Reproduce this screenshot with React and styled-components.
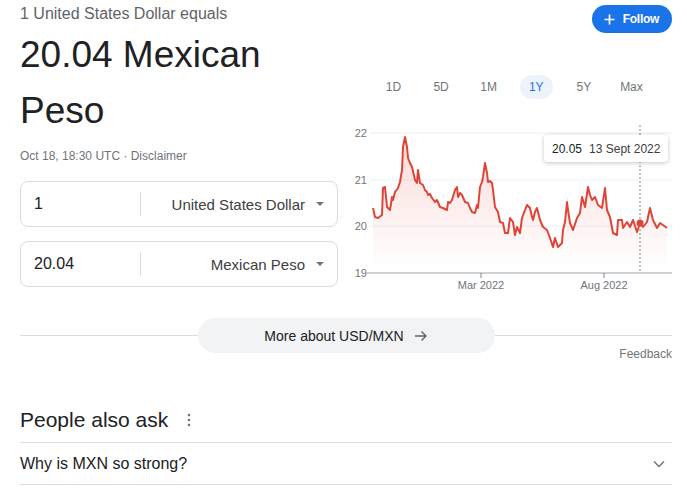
import React from "react";
import styled, { createGlobalStyle } from "styled-components";

const GlobalStyle = createGlobalStyle`
  html, body {
    margin: 0;
    padding: 0;
    background: #fff;
    font-family: "Liberation Sans", Arial, sans-serif;
  }
`;

const Page = styled.div(() => ({
  width: "687px",
  height: "494px",
  boxSizing: "border-box",
  padding: "0 15px 0 20px",
  overflow: "hidden",
  color: "#202124",
}));

const TopGrid = styled.div(() => ({
  display: "grid",
  gridTemplateColumns: "318px 332px",
  columnGap: "2px",
  height: "295px",
}));

const LeftCol = styled.div(() => ({
  display: "flex",
  flexDirection: "column",
}));

const Subtitle = styled.div(() => ({
  marginTop: "4px",
  fontSize: "16px",
  lineHeight: "20px",
  color: "#5f6368",
}));

const Title = styled.div(() => ({
  marginTop: "3px",
  fontSize: "37px",
  lineHeight: "56px",
  color: "#202124",
}));

const DateLine = styled.div(() => ({
  marginTop: "9px",
  fontSize: "12px",
  lineHeight: "16px",
  color: "#70757a",
}));

const ConverterBox = styled.div(({ first }) => ({
  marginTop: first ? "17px" : "14px",
  height: "46px",
  boxSizing: "border-box",
  border: "1px solid #dadce0",
  borderRadius: "8px",
  display: "flex",
  alignItems: "center",
}));

const ValueField = styled.div(() => ({
  width: "120px",
  boxSizing: "border-box",
  paddingLeft: "13px",
  fontSize: "16px",
  color: "#202124",
  borderRight: "1px solid #dadce0",
  height: "24px",
  lineHeight: "24px",
}));

const UnitSelect = styled.div(() => ({
  flex: 1,
  display: "flex",
  justifyContent: "flex-end",
  alignItems: "center",
  paddingRight: "13px",
  fontSize: "15px",
  color: "#3c4043",
}));

const Caret = styled.span(() => ({
  marginLeft: "11px",
  width: 0,
  height: 0,
  borderLeft: "4.5px solid transparent",
  borderRight: "4.5px solid transparent",
  borderTop: "4.5px solid #70757a",
}));

const RightCol = styled.div(() => ({
  display: "flex",
  flexDirection: "column",
}));

const FollowRow = styled.div(() => ({
  display: "flex",
  justifyContent: "flex-end",
  paddingTop: "5px",
}));

const FollowButton = styled.div(() => ({
  display: "flex",
  alignItems: "center",
  gap: "8px",
  height: "28px",
  boxSizing: "border-box",
  padding: "0 13px 0 12px",
  borderRadius: "14px",
  background: "#1a73e8",
  color: "#fff",
  fontSize: "12px",
  fontWeight: "bold",
  letterSpacing: "-0.3px",
}));

const Tabs = styled.div(() => ({
  display: "flex",
  gap: "14.6px",
  marginTop: "42px",
  paddingLeft: "37px",
}));

const Tab = styled.div(({ active }) => ({
  width: "33px",
  height: "24px",
  lineHeight: "24px",
  textAlign: "center",
  borderRadius: "12px",
  fontSize: "12px",
  color: active ? "#1a73e8" : "#70757a",
  background: active ? "#eef3fb" : "transparent",
}));

const ChartWrap = styled.div(() => ({
  position: "relative",
  marginTop: "21px",
  width: "332px",
  height: "175px",
}));

const Tooltip = styled.div(() => ({
  position: "absolute",
  left: "204px",
  top: "15px",
  width: "124px",
  height: "27px",
  boxSizing: "border-box",
  paddingLeft: "8px",
  display: "flex",
  alignItems: "center",
  gap: "7px",
  background: "#fff",
  borderRadius: "4px",
  boxShadow: "0 1px 4px rgba(60,64,67,0.3)",
  fontSize: "12px",
  whiteSpace: "nowrap",
}));

const TipValue = styled.span(() => ({
  color: "#202124",
}));

const TipDate = styled.span(() => ({
  color: "#3c4043",
}));

const MoreRow = styled.div(() => ({
  marginTop: "23px",
  display: "flex",
  alignItems: "center",
  "&::before, &::after": {
    content: '""',
    flex: 1,
    height: "1px",
    background: "#dadce0",
  },
}));

const MoreButton = styled.div(() => ({
  width: "297px",
  height: "35px",
  borderRadius: "18px",
  background: "#f1f3f4",
  display: "flex",
  alignItems: "center",
  justifyContent: "center",
  gap: "10px",
  fontSize: "14px",
  color: "#202124",
}));

const Feedback = styled.div(() => ({
  marginTop: "-7px",
  textAlign: "right",
  fontSize: "12px",
  lineHeight: "16px",
  color: "#70757a",
}));

const AskHeader = styled.div(() => ({
  marginTop: "46px",
  display: "flex",
  alignItems: "center",
  gap: "19px",
  fontSize: "21px",
  lineHeight: "24px",
  paddingBottom: "10px",
  color: "#202124",
}));

const QuestionRow = styled.div(() => ({
  height: "43px",
  boxSizing: "border-box",
  borderTop: "1px solid #dadce0",
  borderBottom: "1px solid #dadce0",
  display: "flex",
  alignItems: "center",
  justifyContent: "space-between",
  paddingRight: "6px",
  fontSize: "16px",
  color: "#202124",
}));

const pts = [
  [373, 208], [375, 217], [378, 218], [382, 215], [383, 188], [385, 187],
  [387, 207], [390, 210], [392, 197], [393, 200], [395, 192], [398, 188],
  [400, 182], [402, 170], [403, 147], [405, 137], [407, 147], [408, 158],
  [410, 163], [412, 167], [415, 180], [417, 183], [418, 170], [420, 183],
  [423, 185], [425, 190], [427, 192], [428, 195], [430, 194], [432, 198],
  [435, 202], [437, 200], [440, 207], [443, 208], [447, 210], [448, 202],
  [450, 203], [452, 200], [455, 190], [457, 187], [458, 197], [460, 193],
  [462, 195], [465, 202], [468, 203], [470, 208], [472, 212], [475, 213],
  [477, 205], [478, 208], [480, 187], [482, 182], [483, 177], [485, 163],
  [487, 173], [488, 182], [490, 181], [492, 183], [493, 190], [495, 207],
  [498, 212], [500, 222], [503, 223], [505, 233], [508, 233], [510, 218],
  [513, 222], [515, 235], [517, 227], [520, 233], [522, 218], [525, 210],
  [527, 205], [530, 208], [532, 217], [533, 220], [535, 212], [537, 208],
  [540, 220], [543, 227], [547, 230], [550, 238], [553, 247], [555, 238],
  [558, 247], [562, 243], [563, 230], [565, 222], [567, 202], [568, 210],
  [570, 223], [573, 230], [577, 218], [580, 213], [582, 197], [585, 207],
  [588, 187], [590, 195], [592, 200], [595, 197], [598, 205], [602, 208],
  [605, 188], [607, 210], [610, 217], [613, 233], [617, 235], [618, 220],
  [622, 220], [623, 228], [627, 222], [630, 227], [633, 220], [637, 232],
  [640, 223], [643, 227], [647, 222], [650, 208], [653, 220], [657, 228],
  [660, 223], [663, 225], [667, 228],
];

const linePath = pts.map((p, i) => (i ? "L" : "M") + p[0] + " " + p[1]).join(" ");
const areaPath =
  linePath + ` L${pts[pts.length - 1][0]} 272 L${pts[0][0]} 272 Z`;

const Chart = () => (
  <svg width="332" height="175" viewBox="340 120 332 175">
    <defs>
      <linearGradient id="fillGrad" x1="0" y1="137" x2="0" y2="268" gradientUnits="userSpaceOnUse">
        <stop offset="0" stopColor="#e34a3b" stopOpacity="0.2" />
        <stop offset="1" stopColor="#e34a3b" stopOpacity="0" />
      </linearGradient>
    </defs>
    {[133, 180, 226].map((y) => (
      <line key={y} x1="370" x2="672" y1={y} y2={y} stroke="#eceef0" strokeWidth="1" />
    ))}
    {[
      ["22", 137],
      ["21", 184],
      ["20", 230],
      ["19", 277],
    ].map(([t, y]) => (
      <text key={t} x="367" y={y} textAnchor="end" fontSize="11" fill="#70757a" fontFamily="Liberation Sans, Arial, sans-serif">
        {t}
      </text>
    ))}
    <path d={areaPath} fill="url(#fillGrad)" />
    <path d={linePath} fill="none" stroke="#de4437" strokeWidth="2" strokeLinejoin="round" />
    <line x1="640" x2="640" y1="125" y2="272" stroke="#80868b" strokeWidth="1" strokeDasharray="2 2" />
    <circle cx="640" cy="223" r="3.5" fill="#de4437" />
    <line x1="367" x2="672" y1="273" y2="273" stroke="#bdc1c6" strokeWidth="1.5" />
    <line x1="481" x2="481" y1="273" y2="278" stroke="#80868b" strokeWidth="1" />
    <line x1="604" x2="604" y1="273" y2="278" stroke="#80868b" strokeWidth="1" />
    <text x="481" y="289" textAnchor="middle" fontSize="11" fill="#70757a" fontFamily="Liberation Sans, Arial, sans-serif">
      Mar 2022
    </text>
    <text x="604" y="289" textAnchor="middle" fontSize="11" fill="#70757a" fontFamily="Liberation Sans, Arial, sans-serif">
      Aug 2022
    </text>
  </svg>
);

const tabs = ["1D", "5D", "1M", "1Y", "5Y", "Max"];

const App = () => (
  <>
    <GlobalStyle />
    <Page>
      <TopGrid>
        <LeftCol>
          <Subtitle>1 United States Dollar equals</Subtitle>
          <Title>
            20.04 Mexican
            <br />
            Peso
          </Title>
          <DateLine>Oct 18, 18:30 UTC · Disclaimer</DateLine>
          <ConverterBox first>
            <ValueField>1</ValueField>
            <UnitSelect>
              United States Dollar
              <Caret />
            </UnitSelect>
          </ConverterBox>
          <ConverterBox>
            <ValueField>20.04</ValueField>
            <UnitSelect>
              Mexican Peso
              <Caret />
            </UnitSelect>
          </ConverterBox>
        </LeftCol>
        <RightCol>
          <FollowRow>
            <FollowButton>
              <svg width="11" height="11" viewBox="0 0 11 11">
                <path d="M5.5 0.5v10M0.5 5.5h10" stroke="#fff" strokeWidth="1.7" />
              </svg>
              Follow
            </FollowButton>
          </FollowRow>
          <Tabs>
            {tabs.map((t) => (
              <Tab key={t} active={t === "1Y"}>
                {t}
              </Tab>
            ))}
          </Tabs>
          <ChartWrap>
            <Chart />
            <Tooltip>
              <TipValue>20.05</TipValue>
              <TipDate>13 Sept 2022</TipDate>
            </Tooltip>
          </ChartWrap>
        </RightCol>
      </TopGrid>
      <MoreRow>
        <MoreButton>
          More about USD/MXN
          <svg width="14" height="14" viewBox="0 0 14 14">
            <path d="M1 7h11M7.5 2.5L12 7l-4.5 4.5" fill="none" stroke="#5f6368" strokeWidth="1.4" />
          </svg>
        </MoreButton>
      </MoreRow>
      <Feedback>Feedback</Feedback>
      <AskHeader>
        People also ask
        <svg width="4" height="14" viewBox="0 0 4 14">
          <circle cx="2" cy="2" r="1.3" fill="#70757a" />
          <circle cx="2" cy="7" r="1.3" fill="#70757a" />
          <circle cx="2" cy="12" r="1.3" fill="#70757a" />
        </svg>
      </AskHeader>
      <QuestionRow>
        Why is MXN so strong?
        <svg width="14" height="10" viewBox="0 0 14 10">
          <path d="M2 2.5l5 5 5-5" fill="none" stroke="#70757a" strokeWidth="1.5" />
        </svg>
      </QuestionRow>
    </Page>
  </>
);

export default App;
